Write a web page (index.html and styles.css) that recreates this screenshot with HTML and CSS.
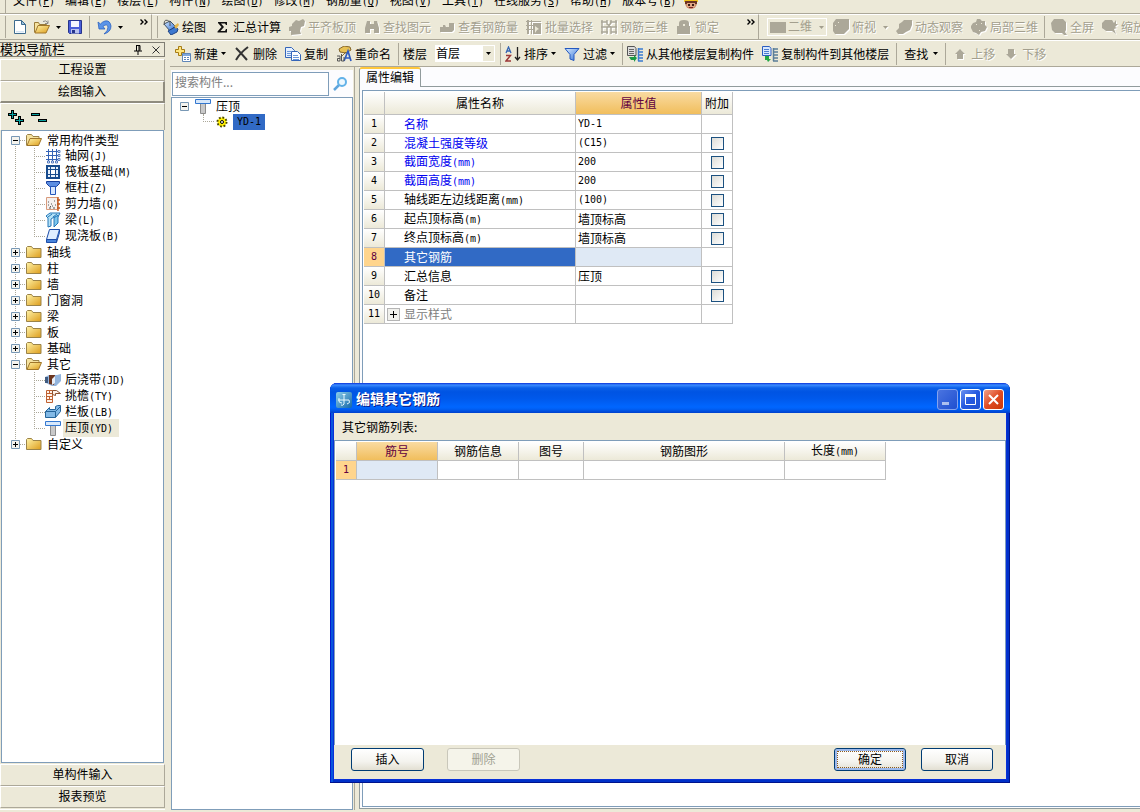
FILE: index.html
```html
<!DOCTYPE html>
<html lang="zh-CN">
<head>
<meta charset="utf-8">
<title>属性编辑</title>
<link rel="stylesheet" href="styles.css">
</head>
<body>
<svg class="defs" aria-hidden="true">
  <defs>
    <linearGradient id="gold" x1="0" y1="0" x2="1" y2="1"><stop offset="0" stop-color="#fff3a8"/><stop offset="1" stop-color="#dd9d1c"/></linearGradient>
    <linearGradient id="blue" x1="0" y1="0" x2="1" y2="1"><stop offset="0" stop-color="#d9ecff"/><stop offset="1" stop-color="#2f6fd6"/></linearGradient>
    <linearGradient id="logo" x1="0" y1="0" x2="1" y2="1"><stop offset="0" stop-color="#8ccdea"/><stop offset="1" stop-color="#1568a8"/></linearGradient>
  </defs>
  <symbol id="new" viewBox="0 0 16 16"><path d="M2.500 1.500h7l4 4v9h-11z" fill="#fff" stroke="#3d6b8e"/><path d="M9.500 1.500v4h4z" fill="#9cc3e0" stroke="#3d6b8e"/><path d="M4 12h8v1.500H4z" fill="#d6e6f5"/></symbol>
  <symbol id="open" viewBox="0 0 16 16"><path d="M.5 13.500v-10h4l1 2h7v2" fill="#f6e3a0" stroke="#9a7b38"/><path d="M1 14l3-7.500h11.500L12 14z" fill="url(#gold)" stroke="#a0762a"/><path d="M9 2.500q3-2 5 1.500m0-2.500v3h-3" fill="none" stroke="#8c8c8c"/></symbol>
  <symbol id="openf" viewBox="0 0 16 16"><path d="M.5 13.500v-10l1-1h4l1.500 2h6v3" fill="#f6e3a0" stroke="#9b8348"/><path d="M1 13.500l3-7h11.500l-3 7z" fill="url(#gold)" stroke="#a0762a"/></symbol>
  <symbol id="save" viewBox="0 0 16 16"><path d="M1.500 1.500h13v13h-12l-1-1z" fill="#4a5ed8" stroke="#26348c"/><path d="M4 2h8v6H4z" fill="#f4f6ff"/><path d="M4 10h8v4.500H4z" fill="#b9c2ee"/><path d="M5 11h3v3H5z" fill="#26348c"/></symbol>
  <symbol id="undo" viewBox="0 0 16 16"><path d="M2 3l1 7h6L7 7.500Q11 4 12 8q0 4-4 7 7-2 7-8-1-6-6-5Q6 3 4.500 5z" fill="#5b94e8" stroke="#2c62c0" stroke-width=".8"/></symbol>
  <symbol id="bucket" viewBox="0 0 16 16"><path d="M1 5l6-3 5 5-5 5z" fill="url(#blue)" stroke="#3c5068"/><path d="M1 6q0-8 6-3v4" fill="none" stroke="#555"/><path d="M5 12l7-4 3 2-1 3-6 3z" fill="#3d78cf" stroke="#1f4382"/><path d="M11 7l4-3 1 2-3 4z" fill="#e5b64b"/></symbol>
  <symbol id="sigma" viewBox="0 0 16 16"><path d="M4 3h9v3h-1l-1-1.500H7L10 8l-3.500 4H11l1-2h1v3.500H3.500v-1L7.500 8 4 4z" fill="#111"/></symbol>
  <symbol id="slab" viewBox="0 0 16 16"><path d="M0 8l3-1 0-2 4-4 3 1 4-2 2 2-1 5-3 1-1 4 1 3-10 1v-4H0z"/></symbol>
  <symbol id="binoc" viewBox="0 0 16 16"><path d="M3 2h3v3h4V2h3l2 7v5h-5v-4H6v4H1V9z"/></symbol>
  <symbol id="view" viewBox="0 0 16 16"><path d="M1 8h3V6h2l1 2h3V4h5v7l-2 2H1z"/></symbol>
  <symbol id="batch" viewBox="0 0 16 16"><path d="M0 2h15v1H0zM0 6h7v1H0zM0 10h7v1H0zM1 1h2v14H1zM5 1h1v14H5zM7 4h8v11H7z"/><path d="M9 7l4 3-2 1-2 3z" fill="#ece9d8"/></symbol>
  <symbol id="mesh" viewBox="0 0 16 16"><path d="M1 1v14M6 1v4l4 3v7M15 1v14M0 3h6M9 3h7M0 8h16M0 13h7M10 13h6M10 1v3L6 9v6" fill="none" stroke="#aca899" stroke-width="1.500"/></symbol>
  <symbol id="lock" viewBox="0 0 16 16"><path d="M3 7V4q0-3 5-3t5 3v3h1v8H1V7z"/><path d="M7 5h2v2H7z" fill="#ece9d8"/></symbol>
  <symbol id="cube" viewBox="0 0 16 16"><path d="M3 0h13v10l-5 5H2l-2-3V4z"/><path d="M2 6h1v1H2zM5 3h1v1H5z" fill="#ece9d8"/></symbol>
  <symbol id="orbit" viewBox="0 0 16 16"><path d="M8 1h8v5l-2 5-4 2-3 2H2l-2-3 3-3 0-4 3-2z"/></symbol>
  <symbol id="local" viewBox="0 0 16 16"><path d="M6 0h3l2 2h3v4l2 2-2 4-4 1-2 3-3-2-3-1-2-4 0-2 2-3 3-1z"/><path d="M5 5h1v1H5zM10 4h1v1h-1zM8 11h1v1H8z" fill="#ece9d8"/></symbol>
  <symbol id="full" viewBox="0 0 16 16"><path d="M3 0h9l3 3v8l-1 2 2 3h-3l-2-2H4l-3-3-1-7z"/></symbol>
  <symbol id="zoomer" viewBox="0 0 16 16"><path d="M3 1h7l2 3 2-3v4h2l-3 3 2 1-3 1 2 5-4-3H4L0 9V4z"/></symbol>
  <symbol id="create" viewBox="0 0 16 16"><path d="M3.500.5h3v3h3v3h-3v3h-3v-3h-3v-3h3z" fill="#ffe680" stroke="#a67c14"/><path d="M7.500 7.500h8v8h-8z" fill="#fff" stroke="#5f86b8"/><path d="M8 8h7v2H8z" fill="#7ea7dc"/><path d="M9 11.500h2m1 0h2m-5 2h2m1 0h2" stroke="#5f86b8"/></symbol>
  <symbol id="del" viewBox="0 0 16 16"><path d="M2 2q5 5 11 12M14 1Q6 7 2 14" fill="none" stroke="#333" stroke-width="2"/></symbol>
  <symbol id="copy" viewBox="0 0 16 16"><path d="M.5 1.500h6l3 3v7h-9z" fill="#e5f0ff" stroke="#3565b8"/><path d="M6.500 5.500h6l3 3v6h-9z" fill="#fff" stroke="#3565b8"/><path d="M2 5.500h4m-4 2h4m-4 2h4m2 0h5m-5 2h6m-6 2h6" stroke="#6b97d8"/></symbol>
  <symbol id="rename" viewBox="0 0 16 16"><path d="M3 3l5-3 6 1 1 3-5 3-6-1z" fill="#e7c154" stroke="#86682c"/><path d="M10 6l-5 5" stroke="#86682c"/><path d="M8 15l4-10 3 10M9.500 12H14" fill="none" stroke="#2d5bc0" stroke-width="1.700"/><path d="M1 10h3v5H1.500v-2.500H4M5.500 8v7H8v-4" fill="none" stroke="#555"/></symbol>
  <symbol id="sort" viewBox="0 0 16 16"><path d="M1 7l2.500-6L6 7M2 5h3" fill="none" stroke="#3465b4" stroke-width="1.300"/><path d="M1 9.500h4.500L1 15h5" fill="none" stroke="#9c3636" stroke-width="1.400"/><path d="M12.500 1v13M10 11l2.500 3 2.500-3" fill="none" stroke="#222" stroke-width="1.300"/></symbol>
  <symbol id="filter" viewBox="0 0 16 16"><path d="M1 2.500h14L10 8.500v6l-4-1.500V8.500z" fill="url(#blue)" stroke="#2458c0"/></symbol>
  <symbol id="fromf" viewBox="0 0 16 16"><path d="M.5.5h7l1.500 2v7H.5z" fill="#ddd" stroke="#555"/><path d="M2 3.500h5m-5 2h5m-5 2h5" stroke="#666"/><path d="M11.500 2v13M11 3h5m-5 3h5m-5 3h5m-5 3h5m-5 3h5" stroke="#3a7bd0" stroke-width="1.500"/><path d="M2 11l5 0v-2l3 3-3 4v-2H4z" fill="#1b9a44"/></symbol>
  <symbol id="tof" viewBox="0 0 16 16"><path d="M.5.5h7l1.500 2v7H.5z" fill="#d8e8ff" stroke="#2c5ec0"/><path d="M2 3.500h5m-5 2h5m-5 2h5" stroke="#4b7dd0"/><path d="M11.500 2v13M11 3h5m-5 3h5m-5 3h5m-5 3h5m-5 3h5" stroke="#5a7e98" stroke-width="1.500"/><path d="M3 10h4v3h2l-3 3-1-2H3z" fill="#22a845"/></symbol>
  <symbol id="up" viewBox="0 0 16 16"><path d="M8 3l5 5h-2v5H5V8H3z"/></symbol>
  <symbol id="down" viewBox="0 0 16 16"><path d="M8 13l5-5h-2V3H5v5H3z"/></symbol>
  <symbol id="arrow" viewBox="0 0 5 3"><path d="M0 0h5L2.500 3z" fill="currentColor"/></symbol>
  <symbol id="more" viewBox="0 0 8 6"><path d="M.5.5L3 3 .5 5.500M4.500.5L7 3 4.500 5.500" fill="none" stroke="#000" stroke-width="1.400"/></symbol>
  <symbol id="worker" viewBox="0 0 16 16"><circle cx="8" cy="9" r="6" fill="#c98a68"/><path d="M1 8q0-7 7-7t7 7z" fill="#f0c419"/><path d="M2 7h12v3H2z" fill="#6a3326"/><path d="M4 9h8v4H4z" fill="#e0a684"/><path d="M5 10h2v2H5zm4 0h2v2H9z" fill="#3a1c14"/><path d="M6 13.500h4" stroke="#7c2424"/></symbol>
  <symbol id="pin" viewBox="0 0 8 10"><path d="M2 .5h4v5M2.500 0v6M5 1v5M0 6h8M4 6v4" fill="none" stroke="#000"/></symbol>
  <symbol id="close" viewBox="0 0 8 8"><path d="M.5.5l7 7m0-7l-7 7" stroke="#333"/></symbol>
  <symbol id="plusplus" viewBox="0 0 16 16"><path d="M4.500 1v9M0 5.500h9M11.500 7v9M7 11.500h9" stroke="#000" stroke-width="3"/><path d="M4.500 2v7M1 5.500h7M11.500 8v7M8 11.500h7" stroke="#08a0a0"/></symbol>
  <symbol id="minmin" viewBox="0 0 16 16"><path d="M0 5.500h9M7 11.500h9" stroke="#000" stroke-width="3"/><path d="M1 5.500h7M8 11.500h7" stroke="#08a0a0"/></symbol>
  <symbol id="folder" viewBox="0 0 16 16"><path d="M.5 13.500V3.500l1-1h4l1.500 2h8v9z" fill="url(#gold)" stroke="#9b8348"/></symbol>
  <symbol id="plus" viewBox="0 0 9 9"><path d="M.5.5h8v8h-8z" fill="#f4f3ee" stroke="#7898b5"/><path d="M2 4.500h5M4.500 2v5" stroke="#000"/></symbol>
  <symbol id="minus" viewBox="0 0 9 9"><path d="M.5.5h8v8h-8z" fill="#f4f3ee" stroke="#7898b5"/><path d="M2 4.500h5" stroke="#000"/></symbol>
  <symbol id="grid" viewBox="0 0 16 16"><path d="M3.500 1v12M7.500 1v12M11.500 1v12M1 3.500h12M1 7.500h12M1 11.500h12" stroke="#3563b5"/><path d="M13 2.500h2v2h-2zm0 4h2v2h-2zm0 4h2v2h-2zM2.500 13h2v2h-2zm4 0h2v2h-2zm4 0h2v2h-2z" fill="#fff" stroke="#3563b5" stroke-width=".8"/></symbol>
  <symbol id="raft" viewBox="0 0 16 16"><path d="M2 2h12v12H2z" fill="#e8f1fb" stroke="#174b8d" stroke-width="2"/><path d="M5.500 3v10M10.500 3v10M3 5.500h10M3 10.500h10" stroke="#174b8d"/><path d="M6 6h4v4H6z" fill="#fff"/></symbol>
  <symbol id="column" viewBox="0 0 16 16"><path d="M1.500 1.500h13v2l-3 3h-7l-3-3z" fill="#5c8ee2" stroke="#173f9d"/><path d="M5.500 6.500h5v8h-5z" fill="#d7e7ff" stroke="#2456bb"/></symbol>
  <symbol id="wall" viewBox="0 0 16 16"><path d="M1.500 1.500h11v12h-11z" fill="#f5f0ee" stroke="#d89a7c"/><path d="M13 1v14M12 4h3m-3 4h3m-3 4h3" stroke="#c2581e" stroke-width="1.400"/><path d="M3 6h1m2 2h1m2-3h1M3 9h1m3 1h1m2-1h1M4 12h2m2 0h2M5 10.500h1" stroke="#555"/></symbol>
  <symbol id="beam" viewBox="0 0 16 16"><path d="M1 4l4-3h10l-2 4H9l-3 2v7l-3 1V6z" fill="#b5e2f7" stroke="#2477b8"/><path d="M9 6l4-3v8l-4 4zM3 5l4-3M8 5l4-3" fill="#7cc6ed" stroke="#2477b8"/></symbol>
  <symbol id="slabb" viewBox="0 0 16 16"><path d="M4.500 1.500h10l-3 10h-10z" fill="#e0eeff" stroke="#1d4da8"/><path d="M1.500 11.500h10v3h-10zM14.500 1.500v3l-3 10" fill="#4784dc" stroke="#1d4da8"/></symbol>
  <symbol id="post" viewBox="0 0 16 16"><path d="M0 5l4-2h8l4-1v7l-5 5-4 0-6-3z" fill="#92b4dd"/><path d="M4 3h6l-1 10-5-1z" fill="#6b351f"/><path d="M7 7l3-3v7l-3 2z" fill="#e7eef8"/><path d="M0 5h3v6H0z" fill="#405b80"/></symbol>
  <symbol id="eave" viewBox="0 0 16 16"><path d="M1.500 2.500h6v12h-6zM1 5.500h7M1 8.500h6M1 11.500h6M4.500 3v3m0 3v3" fill="#fff2e8" stroke="#bf6030"/><path d="M7.500 2.500h4l4 3h-5v2l-3-1z" fill="#fff2e8" stroke="#8a5030"/></symbol>
  <symbol id="rail" viewBox="0 0 16 16"><path d="M.5 7.500h10v6H.5zM.5 7.500l4-4v2h6V2.500l2-1h3v6l-5 6" fill="#82b9e6" stroke="#24649a"/><path d="M10.500 7.500l5-5" stroke="#24649a"/></symbol>
  <symbol id="coping" viewBox="0 0 16 16"><path d="M5.500 5.500h5v10h-5z" fill="#c9c9c9" stroke="#8c8c8c"/><path d="M.5 1.500h15v4H.5z" fill="#d7e8fb" stroke="#3478d0"/></symbol>
  <symbol id="gear" viewBox="0 0 12 12"><circle cx="6" cy="6" r="4.500" fill="#ffef00" stroke="#4c4800" stroke-width="2" stroke-dasharray="1.800 1.700"/><circle cx="6" cy="6" r="3.300" fill="#ffef00"/><circle cx="6" cy="6" r="1.500" fill="#fff" stroke="#000"/></symbol>
  <symbol id="search" viewBox="0 0 16 16"><path d="M6 9l-5 5" stroke="#5fa5dc" stroke-width="2.500"/><circle cx="9" cy="6" r="4" fill="#edf8ff" stroke="#62b2e8" stroke-width="2"/></symbol>
  <symbol id="app" viewBox="0 0 16 16"><rect width="16" height="16" rx="2" fill="url(#logo)"/><path d="M6.500 2.500h3M8 2v10M2 8h11q2 3-2 4M3 6v3q0 2 3 2M8 12q-1 2-3 1" fill="none" stroke="#e8faff"/></symbol>
</svg>

<nav class="menubar" aria-label="菜单">
  <button>文件<span class="m">(<u>F</u>)</span></button>
  <button>编辑<span class="m">(<u>E</u>)</span></button>
  <button>楼层<span class="m">(<u>L</u>)</span></button>
  <button>构件<span class="m">(<u>N</u>)</span></button>
  <button>绘图<span class="m">(<u>D</u>)</span></button>
  <button>修改<span class="m">(<u>M</u>)</span></button>
  <button>钢筋量<span class="m">(<u>Q</u>)</span></button>
  <button>视图<span class="m">(<u>V</u>)</span></button>
  <button>工具<span class="m">(<u>T</u>)</span></button>
  <button>在线服务<span class="m">(<u>S</u>)</span></button>
  <button>帮助<span class="m">(<u>H</u>)</span></button>
  <button>版本号<span class="m">(<u>B</u>)</span></button>
  <svg class="i"><use href="#worker"/></svg>
</nav>

<div class="bars">
  <div class="bar file-bar">
    <button aria-label="新建"><svg class="i"><use href="#new"/></svg></button>
    <button class="drop" aria-label="打开"><svg class="i"><use href="#open"/></svg><svg class="arrow"><use href="#arrow"/></svg></button>
    <button aria-label="保存"><svg class="i"><use href="#save"/></svg></button>
    <span class="sep"></span>
    <button class="drop" aria-label="撤销"><svg class="i"><use href="#undo"/></svg><svg class="arrow"><use href="#arrow"/></svg></button>
    <button class="more" aria-label="更多"><svg><use href="#more"/></svg></button>
  </div>
  <div class="bar draw-bar">
    <button><svg class="i"><use href="#bucket"/></svg>绘图</button>
    <button><svg class="i"><use href="#sigma"/></svg>汇总计算</button>
    <button disabled><svg class="i"><use href="#slab"/></svg>平齐板顶</button>
    <button disabled><svg class="i"><use href="#binoc"/></svg>查找图元</button>
    <button disabled><svg class="i"><use href="#view"/></svg>查看钢筋量</button>
    <button disabled><svg class="i"><use href="#batch"/></svg>批量选择</button>
    <button disabled><svg class="i"><use href="#mesh"/></svg>钢筋三维</button>
    <button disabled><svg class="i"><use href="#lock"/></svg>锁定</button>
    <button class="more" aria-label="更多"><svg><use href="#more"/></svg></button>
  </div>
  <div class="bar view-bar">
    <label class="mode"><span class="swatch"></span><select disabled aria-label="视图模式"><option>二维</option></select><svg class="arrow"><use href="#arrow"/></svg></label>
    <button disabled><svg class="i"><use href="#cube"/></svg>俯视<svg class="arrow"><use href="#arrow"/></svg></button>
    <button disabled><svg class="i"><use href="#orbit"/></svg>动态观察</button>
    <button disabled><svg class="i"><use href="#local"/></svg>局部三维</button>
    <span class="sep"></span>
    <button disabled><svg class="i"><use href="#full"/></svg>全屏</button>
    <button disabled><svg class="i"><use href="#zoomer"/></svg>缩放</button>
  </div>
</div>

<div class="workspace">
  <aside class="dock">
    <div class="dock-title"><span>模块导航栏</span>
      <button aria-label="固定"><svg class="pin"><use href="#pin"/></svg></button>
      <button aria-label="关闭"><svg class="x"><use href="#close"/></svg></button></div>
    <button class="page">工程设置</button>
    <button class="page active">绘图输入</button>
    <div class="dock-tools">
      <button aria-label="展开"><svg class="i"><use href="#plusplus"/></svg></button>
      <button aria-label="折叠"><svg class="i"><use href="#minmin"/></svg></button>
    </div>
    <div class="nav-box">
      <ul class="nav">
        <li><div class="row"><svg class="pm"><use href="#minus"/></svg><i class="dots"></i><svg class="i"><use href="#openf"/></svg><span>常用构件类型</span></div>
          <ul>
            <li class="row"><i class="dots"></i><svg class="i"><use href="#grid"/></svg><span>轴网<span class="m">(J)</span></span></li>
            <li class="row"><i class="dots"></i><svg class="i"><use href="#raft"/></svg><span>筏板基础<span class="m">(M)</span></span></li>
            <li class="row"><i class="dots"></i><svg class="i"><use href="#column"/></svg><span>框柱<span class="m">(Z)</span></span></li>
            <li class="row"><i class="dots"></i><svg class="i"><use href="#wall"/></svg><span>剪力墙<span class="m">(Q)</span></span></li>
            <li class="row"><i class="dots"></i><svg class="i"><use href="#beam"/></svg><span>梁<span class="m">(L)</span></span></li>
            <li class="row"><i class="dots"></i><svg class="i"><use href="#slabb"/></svg><span>现浇板<span class="m">(B)</span></span></li>
          </ul></li>
        <li class="row"><svg class="pm"><use href="#plus"/></svg><i class="dots"></i><svg class="i"><use href="#folder"/></svg><span>轴线</span></li>
        <li class="row"><svg class="pm"><use href="#plus"/></svg><i class="dots"></i><svg class="i"><use href="#folder"/></svg><span>柱</span></li>
        <li class="row"><svg class="pm"><use href="#plus"/></svg><i class="dots"></i><svg class="i"><use href="#folder"/></svg><span>墙</span></li>
        <li class="row"><svg class="pm"><use href="#plus"/></svg><i class="dots"></i><svg class="i"><use href="#folder"/></svg><span>门窗洞</span></li>
        <li class="row"><svg class="pm"><use href="#plus"/></svg><i class="dots"></i><svg class="i"><use href="#folder"/></svg><span>梁</span></li>
        <li class="row"><svg class="pm"><use href="#plus"/></svg><i class="dots"></i><svg class="i"><use href="#folder"/></svg><span>板</span></li>
        <li class="row"><svg class="pm"><use href="#plus"/></svg><i class="dots"></i><svg class="i"><use href="#folder"/></svg><span>基础</span></li>
        <li><div class="row"><svg class="pm"><use href="#minus"/></svg><i class="dots"></i><svg class="i"><use href="#openf"/></svg><span>其它</span></div>
          <ul>
            <li class="row"><i class="dots"></i><svg class="i"><use href="#post"/></svg><span>后浇带<span class="m">(JD)</span></span></li>
            <li class="row"><i class="dots"></i><svg class="i"><use href="#eave"/></svg><span>挑檐<span class="m">(TY)</span></span></li>
            <li class="row"><i class="dots"></i><svg class="i"><use href="#rail"/></svg><span>栏板<span class="m">(LB)</span></span></li>
            <li class="row current"><i class="dots"></i><svg class="i"><use href="#coping"/></svg><span>压顶<span class="m">(YD)</span></span></li>
          </ul></li>
        <li class="row"><svg class="pm"><use href="#plus"/></svg><i class="dots"></i><svg class="i"><use href="#folder"/></svg><span>自定义</span></li>
      </ul>
    </div>
    <button class="page">单构件输入</button>
    <button class="page">报表预览</button>
  </aside>

  <div class="main">
    <div class="bar edit-bar">
      <button><svg class="i"><use href="#create"/></svg>新建<svg class="arrow"><use href="#arrow"/></svg></button>
      <button><svg class="i"><use href="#del"/></svg>删除</button>
      <button><svg class="i"><use href="#copy"/></svg>复制</button>
      <button><svg class="i"><use href="#rename"/></svg>重命名</button>
      <span class="sep"></span>
      <label for="floor">楼层</label>
      <span class="floor"><select id="floor"><option>首层</option></select><svg class="arrow"><use href="#arrow"/></svg></span>
      <span class="sep"></span>
      <button><svg class="i"><use href="#sort"/></svg>排序<svg class="arrow"><use href="#arrow"/></svg></button>
      <button><svg class="i"><use href="#filter"/></svg>过滤<svg class="arrow"><use href="#arrow"/></svg></button>
      <span class="sep"></span>
      <button><svg class="i"><use href="#fromf"/></svg>从其他楼层复制构件</button>
      <button><svg class="i"><use href="#tof"/></svg>复制构件到其他楼层</button>
      <span class="sep"></span>
      <button class="find">查找<svg class="arrow"><use href="#arrow"/></svg></button>
      <span class="sep"></span>
      <button disabled><svg class="i"><use href="#up"/></svg>上移</button>
      <button disabled><svg class="i"><use href="#down"/></svg>下移</button>
    </div>
    <div class="panes">
      <section class="parts">
        <div class="search"><input type="text" placeholder="搜索构件..." aria-label="搜索构件"><button aria-label="搜索"><svg class="i"><use href="#search"/></svg></button></div>
        <div class="part-box">
          <div class="row"><svg class="pm"><use href="#minus"/></svg><svg class="i"><use href="#coping"/></svg><span>压顶</span></div>
          <div class="row leaf"><i class="elbow"></i><svg class="gear"><use href="#gear"/></svg><span class="picked m">YD-1</span></div>
        </div>
      </section>
      <section class="props">
        <div class="tabs"><button class="tab">属性编辑</button></div>
        <div class="tab-page">
          <div class="sheet">
            <table class="data prop-table">
              <colgroup><col class="c-no"><col class="c-name"><col class="c-val"><col class="c-add"></colgroup>
              <thead><tr><th></th><th>属性名称</th><th class="hot">属性值</th><th>附加</th></tr></thead>
              <tbody>
                <tr><th class="m">1</th><td class="key">名称</td><td class="m">YD-1</td><td></td></tr>
                <tr><th class="m">2</th><td class="key">混凝土强度等级</td><td class="m">(C15)</td><td><input type="checkbox" aria-label="混凝土强度等级"></td></tr>
                <tr><th class="m">3</th><td class="key">截面宽度<span class="m">(mm)</span></td><td class="m">200</td><td><input type="checkbox" aria-label="截面宽度"></td></tr>
                <tr><th class="m">4</th><td class="key">截面高度<span class="m">(mm)</span></td><td class="m">200</td><td><input type="checkbox" aria-label="截面高度"></td></tr>
                <tr><th class="m">5</th><td>轴线距左边线距离<span class="m">(mm)</span></td><td class="m">(100)</td><td><input type="checkbox" aria-label="轴线距左边线距离"></td></tr>
                <tr><th class="m">6</th><td>起点顶标高<span class="m">(m)</span></td><td>墙顶标高</td><td><input type="checkbox" aria-label="起点顶标高"></td></tr>
                <tr><th class="m">7</th><td>终点顶标高<span class="m">(m)</span></td><td>墙顶标高</td><td><input type="checkbox" aria-label="终点顶标高"></td></tr>
                <tr class="selected"><th class="m">8</th><td>其它钢筋</td><td></td><td></td></tr>
                <tr><th class="m">9</th><td>汇总信息</td><td>压顶</td><td><input type="checkbox" aria-label="汇总信息"></td></tr>
                <tr><th class="m">10</th><td>备注</td><td></td><td><input type="checkbox" aria-label="备注"></td></tr>
                <tr class="group"><th class="m">11</th><td><div><button aria-label="展开"></button>显示样式</div></td><td></td><td></td></tr>
              </tbody>
            </table>
          </div>
        </div>
      </section>
    </div>
  </div>
</div>

<div class="dialog" role="dialog" aria-labelledby="dlg-title">
  <div class="titlebar">
    <svg class="i"><use href="#app"/></svg><h1 id="dlg-title">编辑其它钢筋</h1>
    <button class="win faded" aria-label="最小化"><svg viewBox="0 0 19 19"><path d="M4 12h7v3H4z" fill="#fff"/></svg></button>
    <button class="win" aria-label="最大化"><svg viewBox="0 0 19 19"><path d="M4.500 5v9.500h10V5" fill="none" stroke="#fff"/><path d="M4 4h11v3H4z" fill="#fff"/></svg></button>
    <button class="win red" aria-label="关闭"><svg viewBox="0 0 19 19"><path d="M5 5l9 9m0-9l-9 9" stroke="#fff" stroke-width="2"/></svg></button>
  </div>
  <div class="client">
    <p class="caption">其它钢筋列表:</p>
    <div class="list">
      <table class="data bar-table">
        <colgroup><col class="b-no"><col class="b-id"><col class="b-id"><col class="b-fig"><col class="b-shape"><col class="b-len"></colgroup>
        <thead><tr><th></th><th class="hot">筋号</th><th>钢筋信息</th><th>图号</th><th>钢筋图形</th><th>长度<span class="m">(mm)</span></th></tr></thead>
        <tbody><tr class="current"><th class="m">1</th><td></td><td></td><td></td><td></td><td></td></tr></tbody>
      </table>
    </div>
    <div class="actions">
      <button class="btn">插入</button><button class="btn" disabled>删除</button>
      <span class="fill"></span>
      <button class="btn default">确定</button><button class="btn">取消</button>
    </div>
  </div>
</div>
</body>
</html>
```
FILE: styles.css
```css
* { box-sizing: border-box; }
body {
  margin: 0;
  height: 100vh;
  display: flex;
  flex-direction: column;
  overflow: hidden;
  background: #ece9d8;
  color: #000;
  font: 12px/16px "Noto Sans CJK SC", sans-serif;
}
button, input, select { font: inherit; color: inherit; }
button { border: 0; padding: 0; background: none; white-space: nowrap; }
ul { list-style: none; margin: 0; padding: 0; }
svg { display: block; flex: none; }
.defs { position: absolute; width: 0; height: 0; }
.i { width: 16px; height: 16px; }
.m { font-family: "DejaVu Sans Mono", monospace; font-size: 10px; }
.arrow { width: 5px; height: 3px; }

/* menu and tool bars */
.menubar {
  flex: none;
  height: 14px;
  display: flex;
  align-items: flex-end;
  gap: 10px;
  padding: 0 0 4px 7px;
  margin-left: 5px;
  overflow: hidden;
  border-left: 1px solid #aca899;
}
.menubar button { line-height: 16px; }
.menubar .i { margin-left: -3px; }
.bars {
  flex: none;
  display: flex;
  height: 27px;
  border-top: 1px solid #aca899;
  border-bottom: 1px solid #aca899;
  margin-top: -1px;
}
.bar {
  display: flex;
  align-items: center;
  gap: 8px;
  flex: none;
  border-top: 1px solid #fff;
  white-space: nowrap;
}
.bar button { display: flex; align-items: center; gap: 3px; }
.bar button:disabled { color: #a39f8e; fill: #aca899; text-shadow: 1px 1px 0 #fff; }
.bar button:disabled svg { filter: drop-shadow(1px 1px 0 #fff); }
.bar .sep { width: 1px; height: 22px; background: #aca899; margin: 0 -2px; }
.bars .bar::before { content: ""; width: 1px; height: 22px; background: #aca899; }
.file-bar { width: 151px; padding-left: 5px; gap: 6px; }
.file-bar .drop { gap: 6px; }
.file-bar .sep { margin: 0; }
.bar .more { margin: 0 3px 10px auto; }
.more svg { width: 8px; height: 6px; }
.draw-bar { width: 607px; padding-left: 5px; gap: 8px; border-left: 1px solid #aca899; }
.draw-bar::before { margin-right: -3px; }
.view-bar { flex: 1; overflow: hidden; padding-left: 4px; border-left: 1px solid #aca899; }
.view-bar::before { margin-right: -4px; }
.view-bar > * { flex: none; }
.view-bar button .arrow { margin-left: 4px; }
.mode {
  display: grid;
  grid-template-columns: 18px 1fr;
  align-items: center;
  width: 60px;
  height: 18px;
  padding-left: 2px;
  border: 1px solid #fff;
  margin-right: -2px;
  color: #a39f8e;
}
.swatch { height: 11px; margin-right: 2px; background: #aca899; }
select { appearance: none; border: 0; padding: 0; background: none; border-radius: 0; }
.mode select { grid-area: 1 / 2; color: #a39f8e; opacity: 1; line-height: 14px; padding-bottom: 2px; }
.mode .arrow { grid-area: 1 / 2; justify-self: end; margin-right: 2px; }

.workspace { flex: 1; min-height: 0; display: flex; gap: 5px; padding-bottom: 2px; }

/* left dock */
.dock { width: 165px; flex: none; display: flex; flex-direction: column; padding: 2px 0 1px; border-bottom: 1px solid #fff; }
.dock-title {
  display: flex;
  align-items: center;
  gap: 10px;
  height: 15px;
  padding-right: 4px;
  margin-bottom: 2px;
  border: 1px solid #807e74;
  border-left: 0;
  font-size: 13px;
  line-height: 13px;
}
.dock-title span { flex: 1; padding-bottom: 2px; }
.pin { width: 8px; height: 10px; }
.x { width: 8px; height: 8px; }
.page {
  height: 22px;
  padding-bottom: 2px;
  border: 1px solid #aca899;
  border-top-color: #fff;
  border-left-color: #fff;
}
.page.active { height: 22px; padding-bottom: 1px; border-bottom: 2px solid #8f8c7f; border-right: 2px solid #8f8c7f; }
.dock-tools { display: flex; gap: 7px; align-items: center; height: 27px; padding-left: 7px; border-top: 1px solid #fff; border-left: 1px solid #fff; border-right: 1px solid #aca899; }
.nav-box {
  flex: 1;
  min-height: 0;
  margin: 0 1px 1px;
  padding-top: 1px;
  background: #fff;
  border: 1px solid #7f9db9;
}
.row { display: flex; align-items: center; height: 16px; white-space: nowrap; }
.pm { width: 9px; height: 9px; }
.dots { width: 6px; height: 1px; background: repeating-linear-gradient(90deg, #aca899 0 1px, transparent 1px 2px); }
.nav {
  padding-left: 9px;
  background: repeating-linear-gradient(#aca899 0 1px, transparent 1px 2px) 13px 8px / 1px calc(100% - 16px) no-repeat;
}
.nav > .row .i, .nav > li > .row .i { margin: 0 5px 0 0; }
.nav ul {
  padding-left: 23px;
  background: repeating-linear-gradient(#aca899 0 1px, transparent 1px 2px) 23px 0 / 1px calc(100% - 8px) no-repeat;
}
.nav ul .dots { width: 11px; }
.nav ul .i { margin-right: 2px; }
.nav ul .row > span { padding: 0 2px; }
.nav ul .current > span { background: #ece9d8; padding-right: 6px; }

/* main area */
.main { flex: 1; min-width: 0; display: flex; flex-direction: column; }
.edit-bar { height: 27px; padding-left: 5px; border-bottom: 1px solid #aca899; gap: 8px; overflow: hidden; }
.edit-bar .sep { margin: 0 -4px 0 -1px; }
.edit-bar .find { margin-left: 3px; gap: 5px; }
.edit-bar .find + .sep { margin-right: -2px; }
.edit-bar .floor { display: grid; align-items: center; width: 60px; height: 17px; background: #fff; border: 1px solid #fff; margin-right: -2px; }
.floor select { grid-area: 1 / 1; line-height: 13px; padding-bottom: 2px; }
.floor .arrow { grid-area: 1 / 1; justify-self: end; width: 11px; height: 15px; padding: 6px 3px; background: #ece9d8; pointer-events: none; }
.panes { flex: 1; min-height: 0; display: flex; gap: 4px; }
.parts { width: 185px; flex: none; display: flex; flex-direction: column; padding: 3px 1px 0; border-right: 1px solid #aca899; }
.search { display: flex; height: 27px; padding: 2px 0 1px 1px; background: #fcfcfe; }
.search input { width: 157px; min-width: 0; padding: 0 2px 4px; background: #fff; border: 1px solid #7f9db9; outline: 0; border-radius: 0; }
.search input::placeholder { color: #808080; opacity: 1; }
.search button { flex: 1; display: flex; align-items: center; justify-content: center; }
.part-box { flex: 1; min-height: 0; background: #fff; border: 1px solid #7f9db9; padding: 0 0 0 8px; }
.part-box .row .i { margin: 0 5px 0 6px; }
.elbow { width: 11px; height: 8px; margin: 0 2px 8px 23px; border: dotted #aca899; border-width: 0 0 1px 1px; }
.gear { width: 12px; height: 12px; }
.picked { margin-left: 5px; padding: 0 4px; background: #316ac5; color: #000; }

.props { flex: 1; min-width: 0; display: flex; flex-direction: column; padding-bottom: 1px; }
.tabs { height: 20px; display: flex; background: #fcfcfe; border-bottom: 1px solid #919b9c; }
.tab {
  height: 20px;
  padding: 0 6px 2px;
  background: #fcfcfe;
  border: 1px solid #919b9c;
  border-top: 2px solid #ffc73c;
  border-bottom: 0;
  border-radius: 3px 3px 0 0;
}
.tab-page { flex: 1; min-height: 0; padding: 3px 0 1px 2px; background: #fcfcfe; border: solid #919b9c; border-width: 0 0 1px 1px; display: flex; }
.sheet { flex: 1; background: #fff; border: 1px solid #7f9db9; border-right: 0; padding: 1px; }

.data { table-layout: fixed; border-collapse: separate; border-spacing: 0; }
.data th, .data td { padding: 0; border: solid #c0c0c0; border-width: 0 1px 1px 0; font-weight: 400; line-height: 16px; white-space: nowrap; }
.data th { background: linear-gradient(#fff, #ece9d8); text-align: center; }
.data .hot { background: linear-gradient(#f9dba2, #f1be5c); color: #600040; }
.prop-table { width: 369px; }
.c-no { width: 21px; }
.c-name { width: 191px; }
.c-val { width: 126px; }
.c-add { width: 31px; }
.prop-table thead tr { height: 23px; }
.prop-table tbody tr { height: 19px; }
.prop-table td:nth-child(2) { padding-left: 19px; }
.prop-table td:nth-child(3) { padding-left: 2px; }
.prop-table .key { color: #0000f0; }
.prop-table input {
  appearance: none;
  display: block;
  width: 13px;
  height: 13px;
  margin: 0 auto;
  border: 1px solid #1c5180;
  background: linear-gradient(135deg, #dcdcd7, #fff);
}
.selected th, .data .current th { background: #ffd58d; color: #600040; }
.selected td:nth-child(2) { background: #316ac5; color: #fff; }
.selected td:nth-child(3), .current td:nth-child(2) { background: #dfe9f5; }
.prop-table .group td:nth-child(2) { padding-left: 2px; color: #808080; }
.group div { display: flex; align-items: center; gap: 4px; }
.group button {
  width: 13px;
  height: 13px;
  border: 1px solid #b5b5b5;
  background:
    linear-gradient(#000, #000) center / 7px 1px no-repeat,
    linear-gradient(#000, #000) center / 1px 7px no-repeat,
    #f0f0ec;
}

/* floating dialog */
.dialog {
  position: absolute;
  left: 330px;
  top: 383px;
  width: 680px;
  height: 400px;
  display: flex;
  flex-direction: column;
  padding: 0 4px 4px;
  background: #0831d9;
  border-radius: 7px 7px 0 0;
  box-shadow: inset -1px -1px 0 #00138c, inset 1px 0 0 #0019cf, inset 3px 0 0 #0855dd, inset -3px -3px 0 #0030c8;
}
.titlebar {
  flex: none;
  height: 30px;
  margin: 0 -4px;
  padding: 3px 6px 0;
  display: flex;
  align-items: center;
  gap: 2px;
  border-radius: 7px 7px 0 0;
  background: linear-gradient(#0831d9 0, #3b8cff 2px, #0a5fe8 5px, #0054e3 9px, #0058ea 15px, #0066ff 24px, #0060f5 26px, #0040cc 30px);
}
.titlebar h1 { flex: 1; margin: 0 0 4px 2px; color: #fff; font-size: 14px; line-height: 20px; font-weight: 700; text-shadow: 1px 1px 0 #0a1883; }
.win { width: 21px; height: 21px; border: 1px solid #fff; border-radius: 3px; background: linear-gradient(135deg, #6d92f0, #2458e0 50%, #1f50d0); }
.win.red { background: linear-gradient(135deg, #f0a088, #e04c24 50%, #c83808); }
.win.faded { border-color: #85a3ee; background: linear-gradient(135deg, #4a74e0, #1f4fd0); }
.win.faded path { opacity: .6; }
.win svg { width: 19px; height: 19px; }
.client { flex: 1; min-height: 0; display: flex; flex-direction: column; background: #ece9d8; }
.caption { margin: 0; padding: 6px 8px 5px; }
.list { flex: 1; min-height: 0; padding: 1px; background: #fff; border: 1px solid #7f9db9; border-bottom: 0; }
.bar-table { width: 550px; }
.bar-table tr { height: 19px; }
.b-no { width: 21px; }
.b-id { width: 81px; }
.b-fig { width: 65px; }
.b-shape { width: 201px; }
.b-len { width: 101px; }
.actions { flex: none; display: flex; gap: 15px; padding: 3px 13px 8px 17px; }
.actions .fill { flex: 1; }
.btn { width: 73px; height: 23px; padding-bottom: 2px; border: 1px solid #003c74; border-radius: 3px; background: linear-gradient(#fff, #f4f3ee 60%, #e2dfd2); }
.fill ~ .btn { width: 72px; }
.btn:disabled { margin-left: 8px; border-color: #c9c7ba; background: #f5f4ea; color: #a1a192; }
.btn.default { box-shadow: inset 0 0 0 2px #9db9eb; outline: 1px dotted #8a5a20; outline-offset: -4px; }
```
